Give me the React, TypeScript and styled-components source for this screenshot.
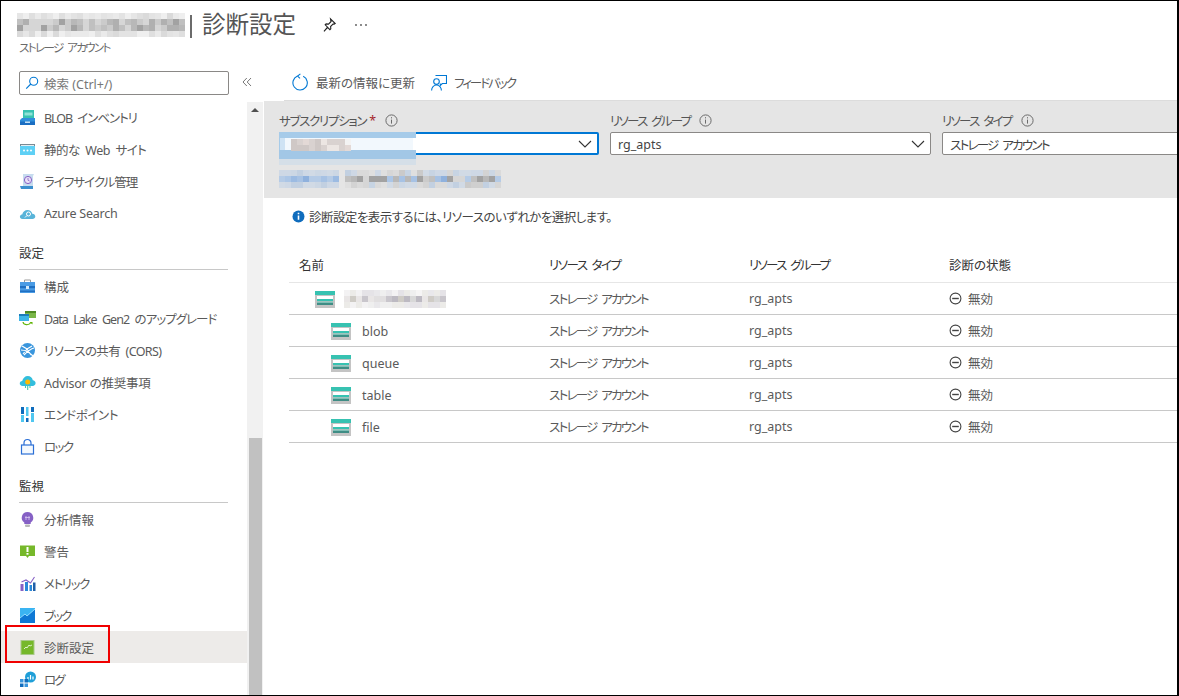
import React from 'react';
import styled, { createGlobalStyle } from 'styled-components';

const GlobalStyle = createGlobalStyle`
  html, body {
    margin: 0;
    padding: 0;
    background: #fff;
  }
  body {
    font-family: "Noto Sans", "Noto Sans CJK JP", sans-serif;
    font-feature-settings: "palt";
    color: #555;
  }
`;

// Pixelated blocks standing in for the redacted names
const pseudo = (i: number, j: number, seed: number) => {
  const v = Math.sin(i * 12.9898 + j * 78.233 + seed) * 43758.5453;
  return v - Math.floor(v);
};

interface MosaicProps {
  cols: number;
  rows: number;
  cell: number;
  seed: number;
  palette: string[];
  fade?: boolean;
}

const Mosaic: React.FC<MosaicProps> = ({ cols, rows, cell, seed, palette, fade }) => {
  const rects = [];
  for (let j = 0; j < rows; j++) {
    for (let i = 0; i < cols; i++) {
      const outer = fade && (j === 0 || j === rows - 1);
      const color = palette[Math.floor(pseudo(i, j, seed) * palette.length)];
      rects.push(
        <rect key={`${i}-${j}`} x={i * cell} y={j * cell} width={cell} height={cell} fill={color} fillOpacity={outer ? 0.4 : 1} />,
      );
    }
  }
  return (
    <svg width={cols * cell} height={rows * cell} shapeRendering="crispEdges" style={{ display: 'block' }}>
      {rects}
    </svg>
  );
};

const Page = styled.div`
  box-sizing: border-box;
  width: 1179px;
  height: 696px;
  border: 1px solid #000;
  border-right-width: 2px;
  display: flex;
  flex-direction: column;
  overflow: hidden;
  background: #fff;
`;

const Header = styled.header`
  height: 64px;
  flex: none;
  padding: 9px 0 0 16px;
  box-sizing: border-box;
`;

const TitleRow = styled.div`
  display: flex;
  align-items: center;
  height: 30px;
`;

const TitleBar = styled.span`
  width: 2px;
  height: 23px;
  background: #6b6b6b;
  margin: 2px 10px 0 5px;
`;

const Title = styled.h1`
  margin: -3px 0 0;
  font-size: 23.5px;
  font-weight: 400;
  color: #555;
  line-height: 30px;
  width: 119px;
  white-space: nowrap;
`;

const HeadAction = styled.span`
  display: flex;
  align-items: center;
  width: 33px;
  color: #333;
`;

const Subtitle = styled.div`
  font-size: 11.5px;
  line-height: 16px;
  margin: 0 0 0 2px;
  color: #6a6a6a;
  letter-spacing: -1.6px;
  word-spacing: 3px;
`;

const Body = styled.div`
  flex: 1;
  min-height: 0;
  display: flex;
`;

const Sidebar = styled.aside`
  width: 262px;
  flex: none;
  display: flex;
  flex-direction: column;
`;

const SearchRow = styled.div`
  height: 37px;
  flex: none;
  box-sizing: border-box;
  padding: 6px 0 0 18px;
  display: flex;
  align-items: flex-start;
`;

const SearchBox = styled.div`
  box-sizing: border-box;
  width: 210px;
  height: 24px;
  border: 1px solid #8a8886;
  border-radius: 2px;
  display: flex;
  align-items: center;
  gap: 5px;
  padding-left: 5px;
  font-size: 12.5px;
  color: #777;
`;

const Collapse = styled.span`
  margin: 6px 0 0 13px;
  display: flex;
  color: #777;
`;

const SideScroll = styled.div`
  flex: 1;
  min-height: 0;
  display: flex;
`;

const NavList = styled.nav`
  width: 246px;
  flex: none;
  overflow: hidden;
`;

const NavItem = styled.div<{ $active?: boolean }>`
  position: relative;
  box-sizing: border-box;
  height: 32px;
  padding-left: 18px;
  padding-bottom: 2px;
  display: flex;
  align-items: center;
  gap: 8px;
  font-size: 12.5px;
  white-space: nowrap;
  color: #5a5a5a;
  background: ${(p) => (p.$active ? '#edebe9' : 'transparent')};
  margin-top: ${(p) => (p.$active ? '-1px' : '0')};
  padding-top: ${(p) => (p.$active ? '3px' : '0')};
  margin-bottom: ${(p) => (p.$active ? '1px' : '0')};
`;

// Segoe and Meiryo set kana much narrower than Noto does
const Tight = styled.span<{ $by: number }>`
  letter-spacing: ${(p) => p.$by}px;
  word-spacing: ${(p) => (p.$by < -0.3 ? 3 : 0)}px;
`;

const IconSlot = styled.span`
  width: 17px;
  height: 17px;
  flex: none;
  display: flex;
`;

const Highlight = styled.span`
  position: absolute;
  left: 4px;
  top: -6px;
  width: 105px;
  height: 38px;
  box-sizing: border-box;
  border: 2px solid #f00000;
`;

const SectionTitle = styled.div`
  box-sizing: border-box;
  height: 40px;
  margin: 0 19px 1px 18px;
  padding-top: 14px;
  line-height: 20px;
  font-size: 12.5px;
  color: #333;
  border-bottom: 1px solid #c8c8c8;
`;

const ScrollTrack = styled.div`
  flex: 1;
  background: #f1f1f1;
  display: flex;
  flex-direction: column;
  justify-content: space-between;
  align-items: center;
`;

const ScrollArrow = styled.span`
  margin-top: 6px;
  width: 0;
  height: 0;
  border-left: 4px solid transparent;
  border-right: 4px solid transparent;
  border-bottom: 4px solid #505050;
`;

const ScrollThumb = styled.span`
  width: 13px;
  height: 257px;
  background: #c1c1c1;
`;

const Main = styled.main`
  flex: 1;
  min-width: 0;
  display: flex;
  flex-direction: column;
  overflow: hidden;
  margin-top: -1px;
`;

const Toolbar = styled.div`
  box-sizing: border-box;
  height: 37px;
  flex: none;
  margin-left: 21px;
  padding-left: 8px;
  border-bottom: 1px solid #dcdcdc;
  display: flex;
  align-items: center;
  gap: 16px;
`;

const ToolButton = styled.span`
  display: flex;
  align-items: center;
  gap: 7px;
  font-size: 12.5px;
  color: #5a5a5a;
  white-space: nowrap;
`;

const FilterPanel = styled.section`
  height: 97px;
  flex: none;
  box-sizing: border-box;
  margin-left: 1px;
  padding: 9px 0 0 15px;
  background: #e5e5e5;
  overflow: hidden;
`;

const FilterGrid = styled.div`
  display: grid;
  grid-template-columns: 320px 321px 320px;
  column-gap: 11px;
`;

const FilterField = styled.div`
  position: relative;
`;

const FilterLabel = styled.label`
  display: flex;
  align-items: center;
  height: 22px;
  padding-bottom: 2px;
  box-sizing: border-box;
  font-size: 12.5px;
  color: #555;
  white-space: nowrap;
`;

const Required = styled.span`
  color: #a4262c;
  margin-left: 3px;
`;

const InfoMark = styled.span`
  display: flex;
  margin-left: 9px;
`;

const Select = styled.div<{ $focused?: boolean }>`
  box-sizing: border-box;
  height: 23px;
  background: #fff;
  border: ${(p) => (p.$focused ? '2px solid #0078d4' : '1px solid #8a8886')};
  border-radius: 2px;
  display: flex;
  align-items: center;
  justify-content: space-between;
  padding: 1px 5px 0 7px;
  font-size: 12.5px;
  color: #444;
  white-space: nowrap;
`;

// Redacted subscription name, smeared over the focused select
const BlurOver = styled.span`
  position: absolute;
  left: 0;
  top: 22px;
  width: 137px;
  height: 33px;
  box-sizing: border-box;
  padding: 7px 0 0 12px;
  background:
    linear-gradient(#a6cbe9 0 6px, transparent 6px),
    linear-gradient(transparent 18px, #a2c7e6 18px 27px, #d5dfe8 27px),
    linear-gradient(90deg, #a6cbe9 0 1px, #cfe3f4 1px 6px, #f2f8fd 6px 98%, #fff 98%);
`;

const BlurLine = styled.div`
  display: flex;
  gap: 6px;
  margin-top: 15px;
`;

const Content = styled.div`
  flex: 1;
  padding-left: 26px;
`;

const InfoRow = styled.div`
  box-sizing: border-box;
  height: 38px;
  padding: 0 0 2px 3px;
  display: flex;
  align-items: center;
  gap: 4px;
  font-size: 12.5px;
  color: #444;
`;

const TableRow = styled.div<{ $head?: boolean }>`
  display: grid;
  grid-template-columns: 260px 200px 200px 1fr;
  box-sizing: border-box;
  height: ${(p) => (p.$head ? '47px' : '32px')};
  align-items: ${(p) => (p.$head ? 'end' : 'center')};
  padding-bottom: ${(p) => (p.$head ? '8px' : '0')};
  border-bottom: 1px solid ${(p) => (p.$head ? '#e6e6e6' : '#c8c8c8')};
  font-size: 12.5px;
  color: ${(p) => (p.$head ? '#333' : '#5a5a5a')};
  white-space: nowrap;
`;

const HeadName = styled.span`
  padding-left: 10px;
`;

const NameCell = styled.span<{ $indent: number; $gap: number }>`
  display: flex;
  align-items: center;
  gap: ${(p) => p.$gap}px;
  padding: 1px 0 0 ${(p) => p.$indent}px;
`;

const StatusCell = styled.span`
  display: flex;
  align-items: center;
  gap: 6px;
`;

/* icons */
const Pin = () => (
  <svg width="16" height="16" viewBox="0 0 16 16" fill="none" stroke="#222" strokeWidth="1.1">
    <path d="M9.5 1.8l4.7 4.7-1 .7-1-.3-2.6 2.6.2 2.3-.9.9-2.3-2.4-3.6 4.1 3.6-4.2-2.4-2.4.9-.9 2.4.2 2.6-2.6-.3-1z" />
  </svg>
);

const Dots = () => (
  <svg width="14" height="4" viewBox="0 0 14 4" fill="#555">
    <circle cx="2" cy="2" r="0.9" />
    <circle cx="7" cy="2" r="0.9" />
    <circle cx="12" cy="2" r="0.9" />
  </svg>
);

const SearchIcon = () => (
  <svg width="14" height="14" viewBox="0 0 14 14" fill="none" stroke="#0078d4" strokeWidth="1.1">
    <circle cx="8.7" cy="5.2" r="4" />
    <path d="M5.8 8L1.2 12.6" />
  </svg>
);

const DoubleLeft = () => (
  <svg width="10" height="10" viewBox="0 0 10 10" fill="none" stroke="#777" strokeWidth="1">
    <path d="M4.8 1L1 5l3.8 4M9 1L5.2 5 9 9" />
  </svg>
);

const Refresh = () => (
  <svg width="17" height="18" viewBox="0 0 17 18" fill="none" stroke="#0078d4" strokeWidth="1.1">
    <path d="M11.2 3.3a7.2 7.2 0 1 1-5.7-.2" />
    <path d="M8.4 0.8L5.6 3.1l2.4 2.3" />
  </svg>
);

const Feedback = () => (
  <svg width="16" height="17" viewBox="0 0 16 17" fill="none" stroke="#0078d4" strokeWidth="1.1">
    <path d="M4.5 1.5h11v8h-4.2l-2 2v-2" />
    <circle cx="5.5" cy="7.6" r="2.8" />
    <path d="M.6 16.4c0-3 2.2-5.4 4.9-5.4s4.9 2.4 4.9 5.4" />
  </svg>
);

const InfoOutline = () => (
  <svg width="13" height="13" viewBox="0 0 13 13" fill="none" stroke="#6a6a6a">
    <circle cx="6.5" cy="6.5" r="5.6" />
    <path d="M6.5 5.6v4M6.5 3.2v1.2" />
  </svg>
);

const InfoSolid = () => (
  <svg width="13" height="13" viewBox="0 0 13 13">
    <circle cx="6.5" cy="6.5" r="6" fill="#0f6cbd" />
    <path d="M6.5 5.6v4.2M6.5 2.8v1.4" stroke="#fff" strokeWidth="1.6" />
  </svg>
);

const Chevron = () => (
  <svg width="14" height="8" viewBox="0 0 14 8" fill="none" stroke="#333" strokeWidth="1.1">
    <path d="M1 1l6 6 6-6" />
  </svg>
);

const MinusCircle = () => (
  <svg width="13" height="13" viewBox="0 0 13 13" fill="none" stroke="#444" strokeWidth="1.1">
    <circle cx="6.5" cy="6.5" r="5.4" />
    <path d="M3.2 6.5h6.6" strokeWidth="1.4" />
  </svg>
);

const StorageIcon = () => (
  <svg width="20" height="17" viewBox="0 0 20 17">
    <rect x="0" y="3" width="20" height="14" fill="#c4c4c4" />
    <rect x="0" y="0" width="20" height="4" fill="#37c2b1" />
    <rect x="2" y="5" width="16" height="3" fill="#fff" />
    <rect x="2" y="8" width="16" height="2" fill="#37c2b1" />
    <rect x="2" y="10.5" width="16" height="1.5" fill="#7fbfb6" />
    <rect x="2" y="12" width="16" height="2" fill="#3f8d85" />
  </svg>
);

const I = ({ children }: { children: React.ReactNode }) => (
  <IconSlot>
    <svg width="17" height="17" viewBox="0 0 17 17">
      {children}
    </svg>
  </IconSlot>
);

const BlobIcon = () => (
  <I>
    <path d="M4 1h11v10H4z" fill="#37c2b1" />
    <path d="M5.5 3.5h8v3h-8z" fill="#8fe3d6" />
    <path d="M2 11l2-2h13v7H2z" fill="#2f8fdc" transform="translate(-1 0)" />
    <path d="M1 12.5h15v3.5H1z" fill="#1b6ec2" />
    <path d="M6 12.5h5v1.4H6z" fill="#d5ecfb" />
  </I>
);

const WebIcon = () => (
  <I>
    <rect x="1" y="3" width="15" height="11" fill="#7a8a94" />
    <rect x="1" y="5" width="15" height="9" fill="#5ed0f5" />
    <rect x="2" y="4" width="13" height="1" fill="#e6eef2" />
    <circle cx="5" cy="9.5" r="1" fill="#fff" />
    <circle cx="8.5" cy="9.5" r="1" fill="#fff" />
    <circle cx="12" cy="9.5" r="1" fill="#fff" />
  </I>
);

const LifecycleIcon = () => (
  <I>
    <path d="M4 1h11l-1 2v10H4z" fill="#c7dcef" />
    <path d="M1 13h13v3H2z" fill="#3c8fce" />
    <circle cx="9" cy="7" r="3.6" fill="#e9e2f7" stroke="#8661c5" strokeWidth="1" />
    <path d="M9 5v2.2l1.6.8" stroke="#8661c5" strokeWidth=".8" fill="none" />
  </I>
);

const AzureSearchIcon = () => (
  <I>
    <path d="M3.5 14C1.5 14 .5 12.5 1 11c.3-1 1.2-1.6 2.2-1.6C4 6.8 6 5 8.5 5c2.4 0 4.3 1.6 4.8 3.8 1.8 0 3 1.2 3 2.7S15 14 13.5 14z" fill="#59b4d9" />
    <circle cx="9.5" cy="9" r="2" fill="none" stroke="#fff" strokeWidth="1" />
    <path d="M8 10.5l-2 2" stroke="#fff" strokeWidth="1" />
  </I>
);

const ConfigIcon = () => (
  <I>
    <path d="M5.5 4V2h6v2" fill="none" stroke="#9a9a9a" />
    <rect x="1" y="4" width="15" height="11" fill="#4a9be4" />
    <rect x="1" y="8" width="15" height="2.2" fill="#1f6fc2" />
    <rect x="1" y="12.5" width="15" height="1.5" fill="#1f6fc2" />
    <rect x="7" y="8" width="3" height="3" fill="#d6ecfb" />
  </I>
);

const DataLakeIcon = () => (
  <I>
    <rect x="6" y="1" width="11" height="7" fill="#7ab648" />
    <rect x="6" y="1" width="11" height="2" fill="#4f8a24" />
    <rect x="0" y="4" width="10" height="7" fill="#3cb4e7" />
    <rect x="0" y="4" width="10" height="2" fill="#1c7cb8" />
    <path d="M4 12c.5 3 5.5 4 8 .5" fill="none" stroke="#5db300" strokeWidth="1.2" />
    <path d="M10.5 12h3v2.6z" fill="#5db300" />
  </I>
);

const CorsIcon = () => (
  <I>
    <circle cx="8.5" cy="8.5" r="7.5" fill="#3a96dd" />
    <path d="M3 4l5 3-4 5M8 7l5-3M8 7l4 6M5 13c3-3 6-6 10-7M2 8c4 0 8 2 12 6" stroke="#fff" strokeWidth="1.2" fill="none" />
  </I>
);

const AdvisorIcon = () => (
  <I>
    <path d="M3.8 12C1.8 12 .5 10.6.8 9c.2-1.2 1.2-2 2.4-2C4 4 6 2 8.8 2c2.6 0 4.6 1.8 5 4.2 1.6.1 2.8 1.3 2.8 2.9S15.3 12 13.6 12z" fill="#32bedd" />
    <circle cx="8.7" cy="8" r="2.5" fill="#ffb900" />
    <path d="M6.5 12v2M8.7 12v4M11 12v2" stroke="#45c9a9" strokeWidth="1.1" />
  </I>
);

const EndpointIcon = () => (
  <I>
    <rect x="2" y="1" width="3" height="7" fill="#0f6cbd" />
    <rect x="2" y="9" width="3" height="7" fill="#50c7f0" />
    <rect x="7" y="1" width="2.5" height="9" fill="#50c7f0" />
    <rect x="7" y="12" width="2.5" height="4" fill="#0f6cbd" />
    <rect x="12" y="1" width="3" height="5" fill="#0f6cbd" />
    <rect x="12" y="7" width="3" height="9" fill="#50c7f0" />
  </I>
);

const LockIcon = () => (
  <I>
    <rect x="2.5" y="7" width="12" height="9" fill="#f4f9fe" stroke="#2b6fd6" strokeWidth="1.2" />
    <path d="M5 7V5a3.5 3.5 0 0 1 7 0v2" fill="none" stroke="#2b6fd6" strokeWidth="1.2" />
  </I>
);

const InsightsIcon = () => (
  <I>
    <path d="M8.5 1a5.8 5.8 0 0 0-3.2 10.6V13h6.4v-1.4A5.8 5.8 0 0 0 8.5 1z" fill="#8661c5" />
    <path d="M6 6.5h5M7 5v4M10 5v4" stroke="#d9c8f2" strokeWidth=".8" fill="none" />
    <rect x="6" y="13.5" width="5" height="2.5" rx="1" fill="#b8b8b8" />
  </I>
);

const AlertIcon = () => (
  <I>
    <path d="M1 2.5h15v10.5h-6l-1.5 2-1.5-2H1z" fill="#76b82a" />
    <rect x="7.5" y="4" width="2" height="5" fill="#fff" />
    <rect x="7.5" y="10" width="2" height="1.7" fill="#fff" />
  </I>
);

const MetricsIcon = () => (
  <I>
    <rect x="1.5" y="9" width="3" height="7" fill="#8661c5" />
    <rect x="6" y="7" width="3" height="9" fill="#2b88d8" />
    <rect x="10.5" y="10" width="2.5" height="6" fill="#2b88d8" />
    <rect x="14" y="7.5" width="2.5" height="8.5" fill="#1f5fa8" />
    <path d="M2.5 7L7 5l4.5 3L15.5 2" fill="none" stroke="#8661c5" strokeWidth="1.1" />
  </I>
);

const WorkbookIcon = () => (
  <I>
    <rect x="1" y="1" width="15" height="15" fill="#3ab4f2" />
    <path d="M1 16v-5l5-4 2 2 8-7v14z" fill="#0f78d4" />
    <path d="M1 11l5-4 2 2 8-7" stroke="#8fdcff" strokeWidth="1" fill="none" />
  </I>
);

const DiagnosticIcon = () => (
  <I>
    <rect x="2" y="1.5" width="13" height="14" fill="#76b82a" stroke="#a9c98a" />
    <path d="M5 10l2-2 1 1 2-3 1 1 2-1" fill="none" stroke="#e7f4d8" strokeWidth=".9" />
  </I>
);

const LogIcon = () => (
  <I>
    <circle cx="11.5" cy="6" r="5.5" fill="#1f9fd8" />
    <path d="M9 8.5V6M11.5 8.5V4M14 8.5V5.5" stroke="#fff" strokeWidth="1.2" />
    <rect x="1" y="8" width="3.5" height="3.5" fill="#3a96dd" />
    <rect x="1" y="12.5" width="3.5" height="3.5" fill="#0f6cbd" />
    <rect x="5.5" y="12.5" width="3.5" height="3.5" fill="#3a96dd" />
    <rect x="5.5" y="8" width="3.5" height="3.5" fill="#0f6cbd" />
  </I>
);

const GREYS = ['#b0b0b0', '#c0c0c0', '#a2a2a2', '#cbcbcb', '#b8b8b8', '#d6d6d6'];
const LIGHT_GREYS = ['#d8d8d8', '#c9c6cc', '#bdbac2', '#e1dfe0', '#cfccc6', '#e9e6e6'];
const BLUES = ['#a7c2e4', '#9cbbe2', '#b5cbe6', '#8fb1dd', '#acc6e6'];

type NavDef = [React.FC, string, number];

const firstGroup: NavDef[] = [
  [BlobIcon, 'BLOB インベントリ', -1.05],
  [WebIcon, '静的な Web サイト', -0.55],
  [LifecycleIcon, 'ライフサイクル管理', -1],
  [AzureSearchIcon, 'Azure Search', -0.25],
];

const settings: NavDef[] = [
  [ConfigIcon, '構成', 0],
  [DataLakeIcon, 'Data Lake Gen2 のアップグレード', -0.95],
  [CorsIcon, 'リソースの共有 (CORS)', -0.65],
  [AdvisorIcon, 'Advisor の推奨事項', -0.2],
  [EndpointIcon, 'エンドポイント', -0.4],
  [LockIcon, 'ロック', -1.6],
];

const monitoring: NavDef[] = [
  [InsightsIcon, '分析情報', 0],
  [AlertIcon, '警告', 0],
  [MetricsIcon, 'メトリック', -1.4],
  [WorkbookIcon, 'ブック', -1.9],
];

const resources = ['blob', 'queue', 'table', 'file'];

const NavEntry: React.FC<{ def: NavDef }> = ({ def: [Icon, label, tight] }) => (
  <NavItem>
    <Icon />
    <Tight $by={tight}>{label}</Tight>
  </NavItem>
);

const ResourceCells = () => (
  <>
    <Tight $by={-1.72}>ストレージ アカウント</Tight>
    <span>rg_apts</span>
    <StatusCell>
      <MinusCircle />
      無効
    </StatusCell>
  </>
);

export default function App() {
  return (
    <Page>
      <GlobalStyle />
      <Header>
        <TitleRow>
          <Mosaic cols={28} rows={4} cell={6} seed={3} palette={GREYS} fade />
          <TitleBar />
          <Title>診断設定</Title>
          <HeadAction>
            <Pin />
          </HeadAction>
          <HeadAction>
            <Dots />
          </HeadAction>
        </TitleRow>
        <Subtitle>ストレージ アカウント</Subtitle>
      </Header>
      <Body>
        <Sidebar>
          <SearchRow>
            <SearchBox>
              <SearchIcon />
              検索 (Ctrl+/)
            </SearchBox>
            <Collapse>
              <DoubleLeft />
            </Collapse>
          </SearchRow>
          <SideScroll>
            <NavList>
              {firstGroup.map((def) => (
                <NavEntry key={def[1]} def={def} />
              ))}
              <SectionTitle>設定</SectionTitle>
              {settings.map((def) => (
                <NavEntry key={def[1]} def={def} />
              ))}
              <SectionTitle>監視</SectionTitle>
              {monitoring.map((def) => (
                <NavEntry key={def[1]} def={def} />
              ))}
              <NavItem $active>
                <DiagnosticIcon />
                診断設定
                <Highlight />
              </NavItem>
              <NavEntry def={[LogIcon, 'ログ', -2]} />
            </NavList>
            <ScrollTrack>
              <ScrollArrow />
              <ScrollThumb />
            </ScrollTrack>
          </SideScroll>
        </Sidebar>
        <Main>
          <Toolbar>
            <ToolButton>
              <Refresh />
              最新の情報に更新
            </ToolButton>
            <ToolButton>
              <Feedback />
              <Tight $by={-2}>フィードバック</Tight>
            </ToolButton>
          </Toolbar>
          <FilterPanel>
            <FilterGrid>
              <FilterField>
                <FilterLabel>
                  <Tight $by={-1.3}>サブスクリプション</Tight>
                  <Required>*</Required>
                  <InfoMark>
                    <InfoOutline />
                  </InfoMark>
                </FilterLabel>
                <Select $focused>
                  <span />
                  <Chevron />
                </Select>
                <BlurOver>
                  <Mosaic cols={10} rows={2} cell={6} seed={8} palette={['#ece6e3', '#d9d2d0', '#e3d9d6', '#f3f3f3', '#cfc8c6']} />
                </BlurOver>
              </FilterField>
              <FilterField>
                <FilterLabel>
                  <Tight $by={-1.72}>リソース グループ</Tight>
                  <InfoMark>
                    <InfoOutline />
                  </InfoMark>
                </FilterLabel>
                <Select>
                  rg_apts
                  <Chevron />
                </Select>
              </FilterField>
              <FilterField>
                <FilterLabel>
                  <Tight $by={-1.7}>リソース タイプ</Tight>
                  <InfoMark>
                    <InfoOutline />
                  </InfoMark>
                </FilterLabel>
                <Select>
                  <Tight $by={-1.72}>ストレージ アカウント</Tight>
                </Select>
              </FilterField>
            </FilterGrid>
            <BlurLine>
              <Mosaic cols={10} rows={3} cell={6} seed={5} palette={BLUES} fade />
              <Mosaic cols={26} rows={3} cell={6} seed={11} palette={[...GREYS, ...BLUES]} fade />
            </BlurLine>
          </FilterPanel>
          <Content>
            <InfoRow>
              <InfoSolid />
              <Tight $by={-0.55}>診断設定を表示するには、リソースのいずれかを選択します。</Tight>
            </InfoRow>
            <TableRow $head>
              <HeadName>名前</HeadName>
              <Tight $by={-1.45}>リソース タイプ</Tight>
              <Tight $by={-1.72}>リソース グループ</Tight>
              <span>診断の状態</span>
            </TableRow>
            <TableRow>
              <NameCell $indent={26} $gap={9}>
                <StorageIcon />
                <Mosaic cols={17} rows={3} cell={6} seed={14} palette={LIGHT_GREYS} fade />
              </NameCell>
              <ResourceCells />
            </TableRow>
            {resources.map((name) => (
              <TableRow key={name}>
                <NameCell $indent={42} $gap={11}>
                  <StorageIcon />
                  {name}
                </NameCell>
                <ResourceCells />
              </TableRow>
            ))}
          </Content>
        </Main>
      </Body>
    </Page>
  );
}
